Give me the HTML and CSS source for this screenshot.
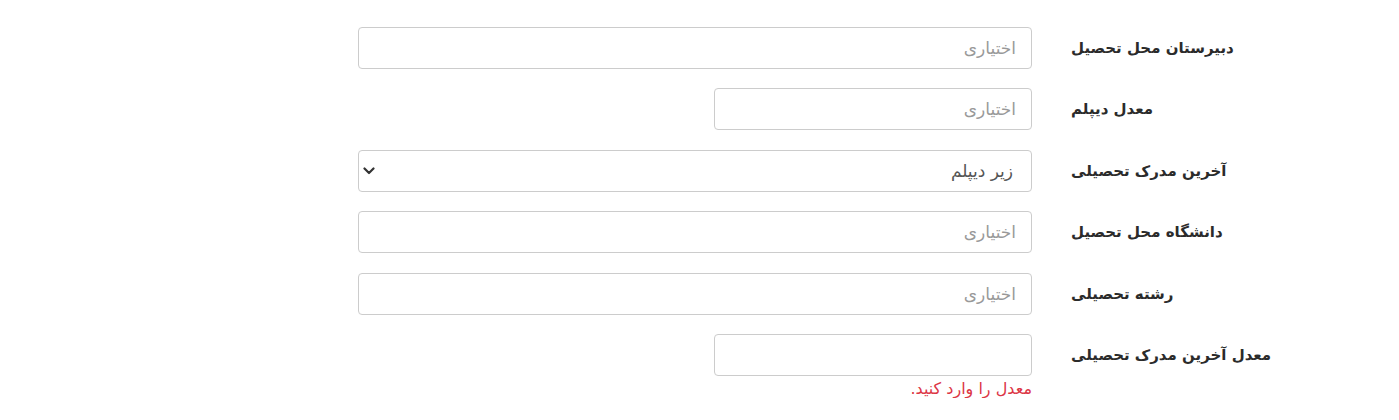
FILE: index.html
```html
<!DOCTYPE html>
<html lang="fa" dir="rtl">
<head>
    <meta charset="UTF-8">
    <title>مشخصات تحصیلی</title>
    <link rel="stylesheet" href="styles.css">
</head>
<body>
    <form class="edu-form">
        <div class="form-row">
            <label class="form-label" for="school">دبیرستان محل تحصیل</label>
            <div class="field">
                <input type="text" id="school" class="form-control" placeholder="اختیاری">
            </div>
        </div>
        <div class="form-row">
            <label class="form-label" for="diploma_avg">معدل دیپلم</label>
            <div class="field">
                <input type="text" id="diploma_avg" class="form-control short" placeholder="اختیاری">
            </div>
        </div>
        <div class="form-row">
            <label class="form-label" for="last_degree">آخرین مدرک تحصیلی</label>
            <div class="field select-wrap">
                <select id="last_degree" class="form-control select">
                    <option selected>زیر دیپلم</option>
                    <option>دیپلم</option>
                    <option>کاردانی</option>
                    <option>کارشناسی</option>
                    <option>کارشناسی ارشد</option>
                    <option>دکتری</option>
                </select>
                <svg class="chevron" width="12" height="8" viewBox="0 0 12 8">
                    <path d="M1.5 1.5 L6 6 L10.5 1.5" fill="none" stroke="#333" stroke-width="2.2" stroke-linecap="round" stroke-linejoin="round"/>
                </svg>
            </div>
        </div>
        <div class="form-row">
            <label class="form-label" for="university">دانشگاه محل تحصیل</label>
            <div class="field">
                <input type="text" id="university" class="form-control" placeholder="اختیاری">
            </div>
        </div>
        <div class="form-row">
            <label class="form-label" for="major">رشته تحصیلی</label>
            <div class="field">
                <input type="text" id="major" class="form-control" placeholder="اختیاری">
            </div>
        </div>
        <div class="form-row">
            <label class="form-label" for="last_avg">معدل آخرین مدرک تحصیلی</label>
            <div class="field">
                <input type="text" id="last_avg" class="form-control short">
                <div class="error">معدل را وارد کنید.</div>
            </div>
        </div>
    </form>
</body>
</html>
```

FILE: styles.css
```css
body {
    font-family: "DejaVu Sans", sans-serif;
    background-color: #fff;
    color: #333;
    margin: 0;
    padding: 27px 0 0 0;
}
.edu-form {
    width: 932px;
    margin-right: 109px;
    display: flex;
    flex-direction: column;
    gap: 19.4px;
}
.form-row {
    display: flex;
    align-items: flex-start;
    gap: 39px;
}
.form-label {
    width: 219px;
    flex-shrink: 0;
    padding-top: 1px;
    text-align: left;
    white-space: nowrap;
    font-size: 15px;
    font-weight: bold;
    color: #2b2b2b;
    line-height: 40px;
}
.field {
    width: 674px;
}
.form-control {
    display: block;
    box-sizing: border-box;
    width: 100%;
    height: 42px;
    padding: 0 15px;
    font-family: inherit;
    font-size: 17px;
    color: #555;
    background-color: #fff;
    border: 1px solid #ccc;
    border-radius: 4px;
}
.form-control::placeholder {
    color: #999;
}
.form-control.short {
    width: 318px;
}
.select-wrap {
    position: relative;
}
.select {
    padding-right: 18px;
    appearance: none;
    -webkit-appearance: none;
}
.chevron {
    position: absolute;
    left: 5px;
    top: 17px;
}
.error {
    margin-top: 3px;
    font-size: 16px;
    color: #dc3545;
}
```
